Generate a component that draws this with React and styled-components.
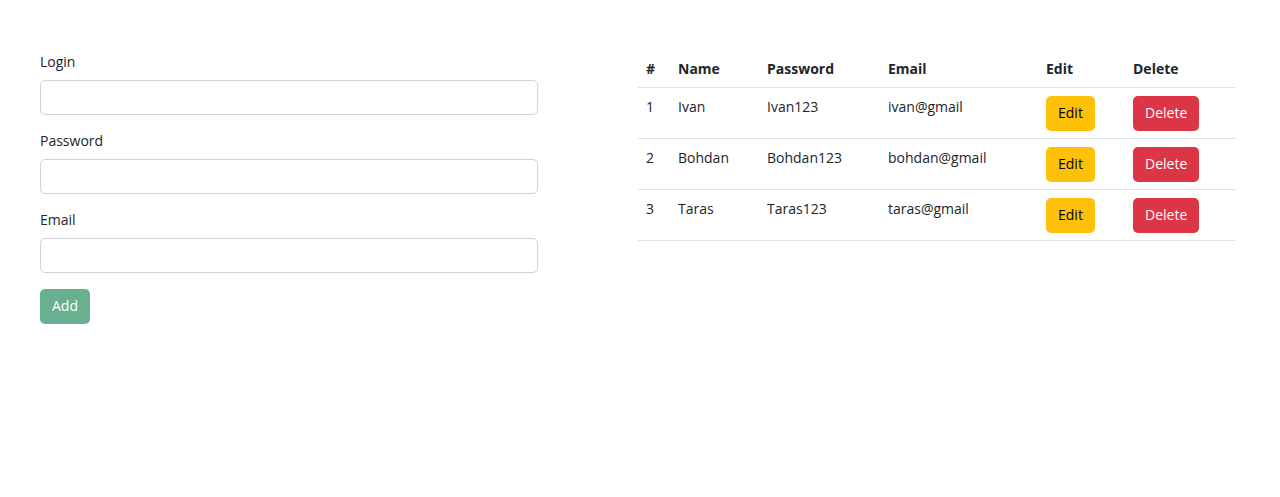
import React from "react";
import styled, { createGlobalStyle } from "styled-components";

const GlobalStyle = createGlobalStyle`
  * {
    box-sizing: border-box;
  }

  body {
    margin: 0;
    background: #ffffff;
    color: #212529;
    font-family: "Open Sans", "Noto Sans", sans-serif;
    font-size: 14px;
    line-height: 21.6px;
  }
`;

const Page = styled.div`
  display: flex;
  align-items: flex-start;
  gap: 100px;
  padding: 51px 44px 0 40px;
`;

const Form = styled.form`
  width: 498px;
  display: flex;
  flex-direction: column;
`;

const Field = styled.div`
  display: flex;
  flex-direction: column;
  margin-bottom: 15.4px;
`;

const Label = styled.label`
  margin-bottom: 7.2px;
  color: #212529;
`;

const Input = styled.input`
  height: 35px;
  padding: 5px 11px;
  border: 1px solid #ced4da;
  border-radius: 5px;
  font: inherit;
  outline: none;
`;

const Button = styled.button`
  align-self: flex-start;
  height: 35px;
  padding: 0 11px;
  border: 1px solid transparent;
  border-radius: 5px;
  font: inherit;
  cursor: pointer;
  background: ${(p) => p.$bg};
  color: ${(p) => p.$fg};
  opacity: ${(p) => (p.disabled ? 0.65 : 1)};
`;

const Table = styled.table`
  width: 598px;
  border-collapse: collapse;
  table-layout: fixed;

  th,
  td {
    padding: 7px 8px;
    text-align: left;
    vertical-align: top;
    border-bottom: 1px solid #dee2e6;
  }

  td {
    padding-top: 8px;
    padding-bottom: 7px;
  }

  th {
    font-weight: 700;
    color: #212529;
  }
`;

const Col = styled.col`
  width: ${(p) => p.$w}px;
`;

const users = [
  { id: 1, name: "Ivan", password: "Ivan123", email: "ivan@gmail" },
  { id: 2, name: "Bohdan", password: "Bohdan123", email: "bohdan@gmail" },
  { id: 3, name: "Taras", password: "Taras123", email: "taras@gmail" },
];

const App = () => {
  return (
    <>
      <GlobalStyle />
      <Page>
        <Form onSubmit={(e) => e.preventDefault()}>
          <Field>
            <Label>Login</Label>
            <Input type="text" />
          </Field>
          <Field>
            <Label>Password</Label>
            <Input type="password" />
          </Field>
          <Field>
            <Label>Email</Label>
            <Input type="email" />
          </Field>
          <Button type="submit" $bg="#198754" $fg="#ffffff" disabled>
            Add
          </Button>
        </Form>

        <Table>
          <colgroup>
            <Col $w={32} />
            <Col $w={89} />
            <Col $w={121} />
            <Col $w={158} />
            <Col $w={87} />
            <Col $w={111} />
          </colgroup>
          <thead>
            <tr>
              <th>#</th>
              <th>Name</th>
              <th>Password</th>
              <th>Email</th>
              <th>Edit</th>
              <th>Delete</th>
            </tr>
          </thead>
          <tbody>
            {users.map((u) => (
              <tr key={u.id}>
                <td>{u.id}</td>
                <td>{u.name}</td>
                <td>{u.password}</td>
                <td>{u.email}</td>
                <td>
                  <Button $bg="#ffc107" $fg="#000000">
                    Edit
                  </Button>
                </td>
                <td>
                  <Button $bg="#dc3545" $fg="#ffffff">
                    Delete
                  </Button>
                </td>
              </tr>
            ))}
          </tbody>
        </Table>
      </Page>
    </>
  );
};

export default App;
